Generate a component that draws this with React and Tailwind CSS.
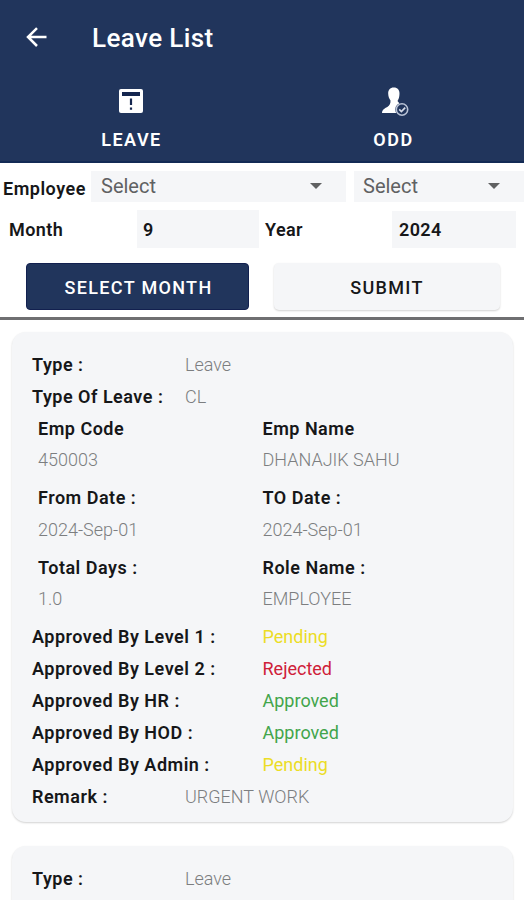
const INK = "text-[#161719]";
const MUTED = "text-[#7c7e80] font-[350]";
const STATUS = {
  Pending: "text-[#ecdd25]",
  Rejected: "text-[#cf2038]",
  Approved: "text-[#42a54b]",
};

function BackArrow() {
  return (
    <svg width="22" height="22" viewBox="0 0 22 22" fill="none" stroke="#fff" strokeWidth="2.5">
      <path d="M20.500 10H2.500M11 1.200L2 10l9 9" />
    </svg>
  );
}

function LeaveIcon() {
  return (
    <svg width="24" height="24" viewBox="0 0 24 24">
      <rect width="24" height="24" rx="2" fill="#fff" />
      <path d="M3 3h18v4H3z" fill="#14264f" />
      <path d="M10.9 9.5h2.2v6.5h-2.2zM10.900 18.600h2.200v2.200h-2.200z" fill="#14264f" />
    </svg>
  );
}

function OddIcon() {
  return (
    <svg width="28" height="30" viewBox="0 0 28 30" fill="none">
      <path
        d="M12.800 1.500C9 1.500 7 4 7.200 7.800c.1 3 1 5 2.300 6.700.2 3-.8 5-3.200 6.500C3.500 22.500 1.300 23.500 1 27h14l3.500-9.500-2-2.500c1.200-1.700 1.900-3.700 2-7.200C18.700 4 16.600 1.500 12.800 1.500z"
        fill="#fff"
      />
      <circle cx="21" cy="23.500" r="6.800" fill="#21355c" />
      <circle cx="21" cy="23.500" r="5.700" stroke="#b9c2d6" strokeWidth="1.600" />
      <path d="M18.200 23.300l2.200 2.200 3.800-3.800" stroke="#d5dbe8" strokeWidth="1.700" />
    </svg>
  );
}

function Caret() {
  return (
    <svg width="12" height="6" viewBox="0 0 12 6">
      <path d="M0 0h12L6 6z" fill="#606162" />
    </svg>
  );
}

function Row({ label, value, wide }) {
  return (
    <div className="flex h-8 items-center">
      <div className={`${wide ? "w-[230.500px]" : "w-[153px]"} ${INK} font-semibold tracking-[0.5px]`}>{label}</div>
      <div className={STATUS[value] || MUTED}>{value}</div>
    </div>
  );
}

function Pair({ left, right }) {
  return (
    <div className="grid h-[69.600px] grid-cols-[224.500px_1fr] content-start pl-1.5">
      {[left, right].map(([label, value]) => (
        <div key={label}>
          <div className={`flex h-8 items-center font-semibold tracking-[0.5px] ${INK}`}>{label}</div>
          <div className={`flex h-[31px] items-center ${MUTED}`}>{value}</div>
        </div>
      ))}
    </div>
  );
}

function Card({ children }) {
  return (
    <section className="mr-[11px] ml-3 h-[490px] shrink-0 rounded-[14px] bg-[#f5f6f8] pt-4 pl-5 text-[18px] shadow-[0_1px_2px_rgba(0,0,0,0.18)]">
      {children}
    </section>
  );
}

export default function App() {
  return (
    <div className="flex h-[900px] w-[524px] flex-col overflow-hidden bg-white font-[Roboto,sans-serif] whitespace-nowrap">
      <header className="h-[163px] shrink-0 border-b-2 border-[#132a55] bg-[#21355c] text-white">
        <div className="flex h-[76px] items-center pl-[26px]">
          <BackArrow />
          <h1 className="ml-11 text-[26px] font-medium tracking-[0.4px]">Leave List</h1>
        </div>
        <nav className="grid grid-cols-2 text-[18px] font-semibold tracking-[1.5px]">
          <div className="flex flex-col items-center">
            <div className="flex h-[50px] items-center"><LeaveIcon /></div>
            <div className="h-7 pl-px leading-[27px]">LEAVE</div>
          </div>
          <div className="flex flex-col items-center">
            <div className="flex h-[50px] items-center pl-1"><OddIcon /></div>
            <div className="h-7 pl-px leading-[27px]">ODD</div>
          </div>
        </nav>
      </header>

      <div className="h-[157px] shrink-0 border-b-[3px] border-[#6f6f71]">
        <div className="flex h-[46px] items-center">
          <div className={`w-[91px] pt-1 pl-[3px] text-[18px] font-semibold tracking-[0.500px] ${INK}`}>Employee</div>
          <div className="flex h-[31px] w-[255px] items-center justify-between bg-[#f5f6f8] pr-6 pl-2.5 text-[20px] text-[#606162]">
            Select<Caret />
          </div>
          <div className="ml-2 flex h-[31px] flex-1 items-center justify-between bg-[#f5f6f8] pr-6 pl-[9px] text-[20px] text-[#606162]">
            Select<Caret />
          </div>
        </div>
        <div className={`-mt-px flex h-[42px] items-center text-[18px] font-semibold tracking-[0.4px] ${INK}`}>
          <div className="w-[137px] pl-[9px]">Month</div>
          <div className="flex h-[38px] w-[122px] items-center bg-[#f5f6f8] pl-1.5">9</div>
          <div className="w-[133px] pl-1.5">Year</div>
          <div className="flex h-[37px] w-[124px] items-center bg-[#f5f6f8] pl-[7px]">2024</div>
        </div>
        <div className="flex gap-[25px] pt-[13px] pl-[26px] text-[18px] font-medium">
          <button className="h-[47px] w-[223px] rounded-[4px] border border-[#12204f] bg-[#21355c] pt-px pl-0.5 tracking-[1.35px] text-white">SELECT MONTH</button>
          <button className={`h-[47px] w-[226px] rounded-[5px] bg-[#f5f6f8] pt-px tracking-[1.35px] shadow-[0_1px_2px_rgba(0,0,0,0.18)] ${INK}`}>SUBMIT</button>
        </div>
      </div>

      <main className="flex flex-col gap-6 pt-3">
        <Card>
          <Row label="Type :" value="Leave" />
          <Row label="Type Of Leave :" value="CL" />
          <Pair left={["Emp Code", "450003"]} right={["Emp Name", "DHANAJIK SAHU"]} />
          <Pair left={["From Date :", "2024-Sep-01"]} right={["TO Date :", "2024-Sep-01"]} />
          <Pair left={["Total Days :", "1.0"]} right={["Role Name :", "EMPLOYEE"]} />
          <Row wide label="Approved By Level 1 :" value="Pending" />
          <Row wide label="Approved By Level 2 :" value="Rejected" />
          <Row wide label="Approved By HR :" value="Approved" />
          <Row wide label="Approved By HOD :" value="Approved" />
          <Row wide label="Approved By Admin :" value="Pending" />
          <Row label="Remark :" value="URGENT WORK" />
        </Card>
        <Card>
          <Row label="Type :" value="Leave" />
        </Card>
      </main>
    </div>
  );
}
